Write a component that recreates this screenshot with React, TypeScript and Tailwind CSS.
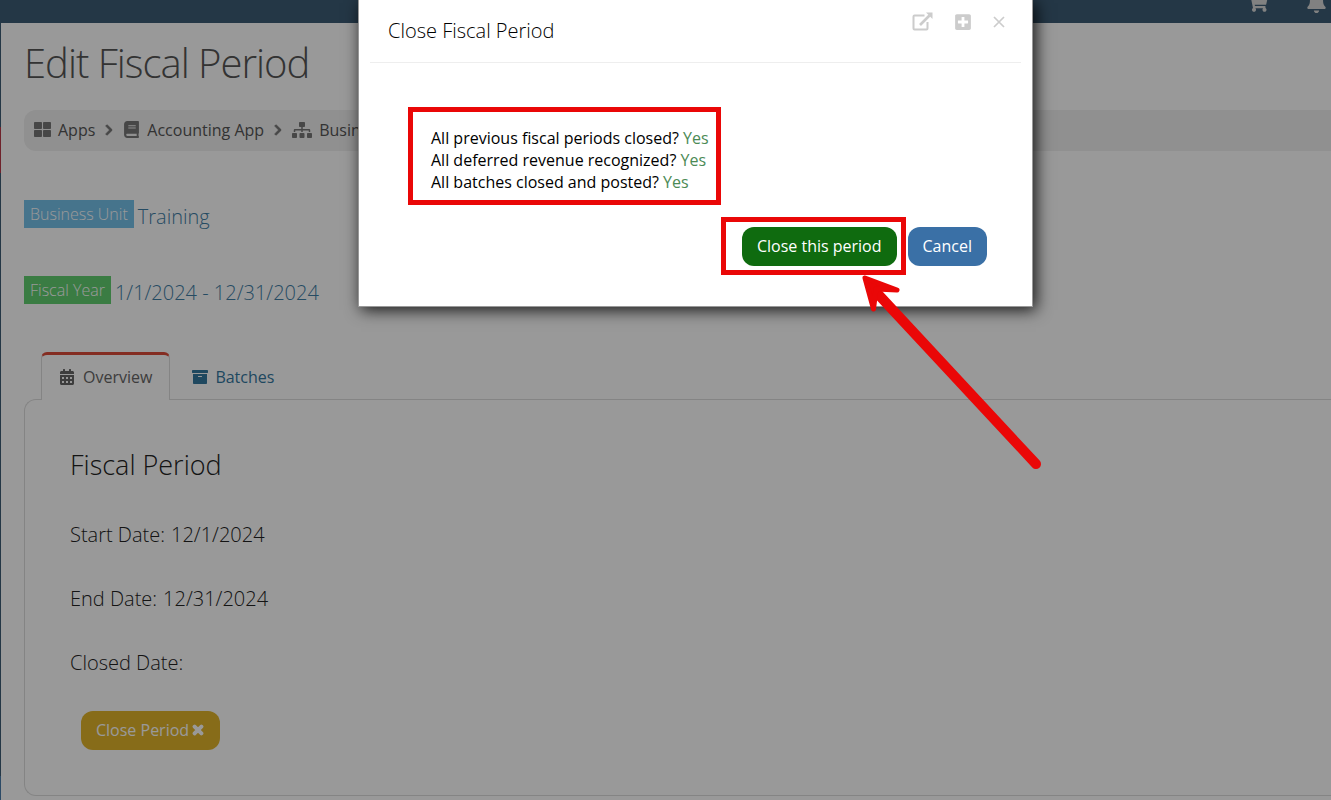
import type { ReactNode } from "react";
import {
  FaArchive,
  FaBell,
  FaBook,
  FaCalendarAlt,
  FaChevronRight,
  FaPlusSquare,
  FaShoppingCart,
  FaSitemap,
  FaThLarge,
  FaTimes,
} from "react-icons/fa";

const checks = [
  { question: "All previous fiscal periods closed?", answer: "Yes" },
  { question: "All deferred revenue recognized?", answer: "Yes" },
  { question: "All batches closed and posted?", answer: "Yes" },
];

const crumbs = [
  { label: "Apps", icon: <FaThLarge className="size-[17px]" /> },
  { label: "Accounting App", icon: <FaBook className="size-[17px]" /> },
  { label: "Business Unit", icon: <FaSitemap className="h-4 w-5" /> },
];

function TopBar() {
  return (
    <header className="flex h-[23px] items-end justify-end gap-[38px] bg-[#3c5c75] pr-1 pb-2.5 text-[#d8d8d8]">
      <button type="button" aria-label="Cart">
        <FaShoppingCart className="size-[21px]" />
      </button>
      <button type="button" aria-label="Notifications">
        <FaBell className="size-[21px]" />
      </button>
    </header>
  );
}

function SideStrip() {
  return (
    <aside className="flex w-px flex-col bg-[#3c5c75]">
      <div className="mt-[104px] h-[46px] bg-[#b93a48]" />
      <div className="mt-auto h-6 bg-[#4a7cab]" />
    </aside>
  );
}

function Breadcrumbs() {
  return (
    <nav
      aria-label="Breadcrumb"
      className="mt-6 flex h-[41px] items-center rounded-l-xl bg-[#f0f0f0] pb-0.5 pl-2.5 text-base text-[#555]"
    >
      {crumbs.map((crumb, i) => (
        <span key={crumb.label} className="flex items-center">
          {i > 0 && (
            <FaChevronRight className="mx-2 size-3 stroke-current stroke-[40] text-[#777]" />
          )}
          <a href="#" className="flex items-center gap-[7px]">
            <span className="text-[#777]">{crumb.icon}</span>
            {crumb.label}
          </a>
        </span>
      ))}
    </nav>
  );
}

function Tagged({
  tag,
  tagClass,
  children,
}: {
  tag: string;
  tagClass: string;
  children: ReactNode;
}) {
  return (
    <div className="flex h-7 items-start gap-1">
      <span className={`h-7 px-1.5 text-base leading-7 font-light text-white ${tagClass}`}>
        {tag}
      </span>
      <a href="#" className="pt-[3px] text-xl leading-7 font-light text-[#3f7ea6]">
        {children}
      </a>
    </div>
  );
}

function ExternalLinkIcon() {
  return (
    <svg viewBox="0 0 21 19" className="h-[19px] w-[21px]" fill="none" aria-hidden="true">
      <path
        d="M12.5 3.5H2.5a1 1 0 0 0-1 1v12a1 1 0 0 0 1 1h12a1 1 0 0 0 1-1V10"
        stroke="currentColor"
        strokeWidth="2"
      />
      <path d="M8 13 17.5 3.5" stroke="currentColor" strokeWidth="2.6" />
      <path d="M14 0.5h6.5v6.5z" fill="currentColor" />
    </svg>
  );
}

function CloseDialog() {
  return (
    <div
      role="dialog"
      aria-labelledby="dialog-title"
      className="relative h-fit w-[675px] border border-t-0 border-[#999] bg-white pb-[31px] shadow-[3px_3px_15px_rgba(0,0,0,0.85)]"
    >
      <div className="mx-[11px] flex h-[63px] items-start justify-between border-b border-[#eee] pr-4 pl-[18px]">
        <h2 id="dialog-title" className="pt-4 text-xl leading-[30px] font-light text-black">
          Close Fiscal Period
        </h2>
        <div className="flex items-center gap-[21px] pt-3 text-[#ccc]">
          <button type="button" aria-label="Open in new window">
            <ExternalLinkIcon />
          </button>
          <button type="button" aria-label="Maximize">
            <FaPlusSquare className="size-[18px]" />
          </button>
          <button type="button" aria-label="Close">
            <svg viewBox="0 0 12 12" className="size-3" aria-hidden="true">
              <path d="M1 1l10 10M11 1L1 11" stroke="currentColor" strokeWidth="1.7" />
            </svg>
          </button>
        </div>
      </div>

      <div className="pt-11 pr-[45px] pl-[49px]">
        <ul className="w-fit border-[5px] border-[#ea0707] pt-[15px] pr-[7px] pb-[7px] pl-[18px] text-base leading-[22px] text-black">
          {checks.map((check) => (
            <li key={check.question}>
              {check.question} <span className="text-[#4b8a55]">{check.answer}</span>
            </li>
          ))}
        </ul>
        <div className="mt-3 flex items-center justify-end">
          <div className="border-[5px] border-[#ea0707] pt-[5px] pr-1 pb-1 pl-4">
            <button
              type="button"
              className="block h-[39px] rounded-xl bg-[#0f6b0f] px-[15px] pb-0.5 text-base text-white"
            >
              Close this period
            </button>
          </div>
          <button
            type="button"
            className="ml-0.5 h-[39px] rounded-xl bg-[#3a70a6] px-[15px] pb-px text-base text-white"
          >
            Cancel
          </button>
        </div>
      </div>

      {/* pointer to the confirm button */}
      <svg
        viewBox="0 0 180 196"
        className="pointer-events-none absolute top-[274px] left-[502px] h-[196px] w-[180px]"
        aria-hidden="true"
      >
        <path d="M175 190 16 19" stroke="#ea0707" strokeWidth="10" strokeLinecap="round" />
        <path
          d="M4 4 36 16 15 15 12.500 35z"
          fill="#ea0707"
          stroke="#ea0707"
          strokeWidth="5"
          strokeLinejoin="round"
        />
      </svg>
    </div>
  );
}

export default function App() {
  return (
    <div className="relative min-h-screen overflow-hidden bg-white font-['Open_Sans',sans-serif]">
      <div className="flex min-h-screen flex-col">
        <TopBar />
        <div className="flex grow">
          <SideStrip />
          <main className="grow pb-1 pl-[23px]">
            <h1 className="pt-4 text-[40px] leading-[47px] font-light tracking-tight text-[#555]">
              Edit Fiscal Period
            </h1>
            <Breadcrumbs />

            <div className="mt-[49px] flex flex-col gap-12">
              <Tagged tag="Business Unit" tagClass="bg-[#75c1e9]">
                Training
              </Tagged>
              <Tagged tag="Fiscal Year" tagClass="bg-[#61cf71]">
                1/1/2024 - 12/31/2024
              </Tagged>
            </div>

            <div role="tablist" className="mt-12 flex pl-[17px] text-base">
              <button
                type="button"
                role="tab"
                aria-selected="true"
                className="z-10 -mb-px flex h-12 items-center gap-2 rounded-t-md border border-t-[3px] border-b-0 border-[#ddd] border-t-[#dd4b39] bg-white px-[17px] pb-0.5 text-[#666]"
              >
                <FaCalendarAlt className="size-4" />
                Overview
              </button>
              <button
                type="button"
                role="tab"
                aria-selected="false"
                className="flex h-[47px] items-center gap-[7px] px-[22px] pt-[3px] text-[#35789f]"
              >
                <FaArchive className="size-4" />
                Batches
              </button>
            </div>

            <section className="h-[397px] rounded-l-xl border border-r-0 border-[#ddd] pt-[45px] pl-[45px] font-light text-[#222]">
              <h2 className="text-[27px] leading-10">Fiscal Period</h2>
              <dl className="mt-9 flex flex-col gap-9 text-xl leading-7">
                <div className="flex gap-1.5">
                  <dt>Start Date:</dt>
                  <dd>12/1/2024</dd>
                </div>
                <div className="flex gap-1.5">
                  <dt>End Date:</dt>
                  <dd>12/31/2024</dd>
                </div>
                <div className="flex gap-1.5">
                  <dt>Closed Date:</dt>
                  <dd />
                </div>
              </dl>
              <button
                type="button"
                className="mt-[34px] ml-[11px] flex h-[39px] items-center gap-0.5 rounded-xl bg-[#e1b42b] px-[15px] pb-0.5 text-base font-normal text-white"
              >
                Close Period
                <FaTimes className="size-3.5 stroke-current stroke-[50]" />
              </button>
            </section>
          </main>
        </div>
      </div>

      <div className="absolute inset-0 z-20 flex justify-center bg-black/40 pl-[60px]">
        <CloseDialog />
      </div>
    </div>
  );
}
